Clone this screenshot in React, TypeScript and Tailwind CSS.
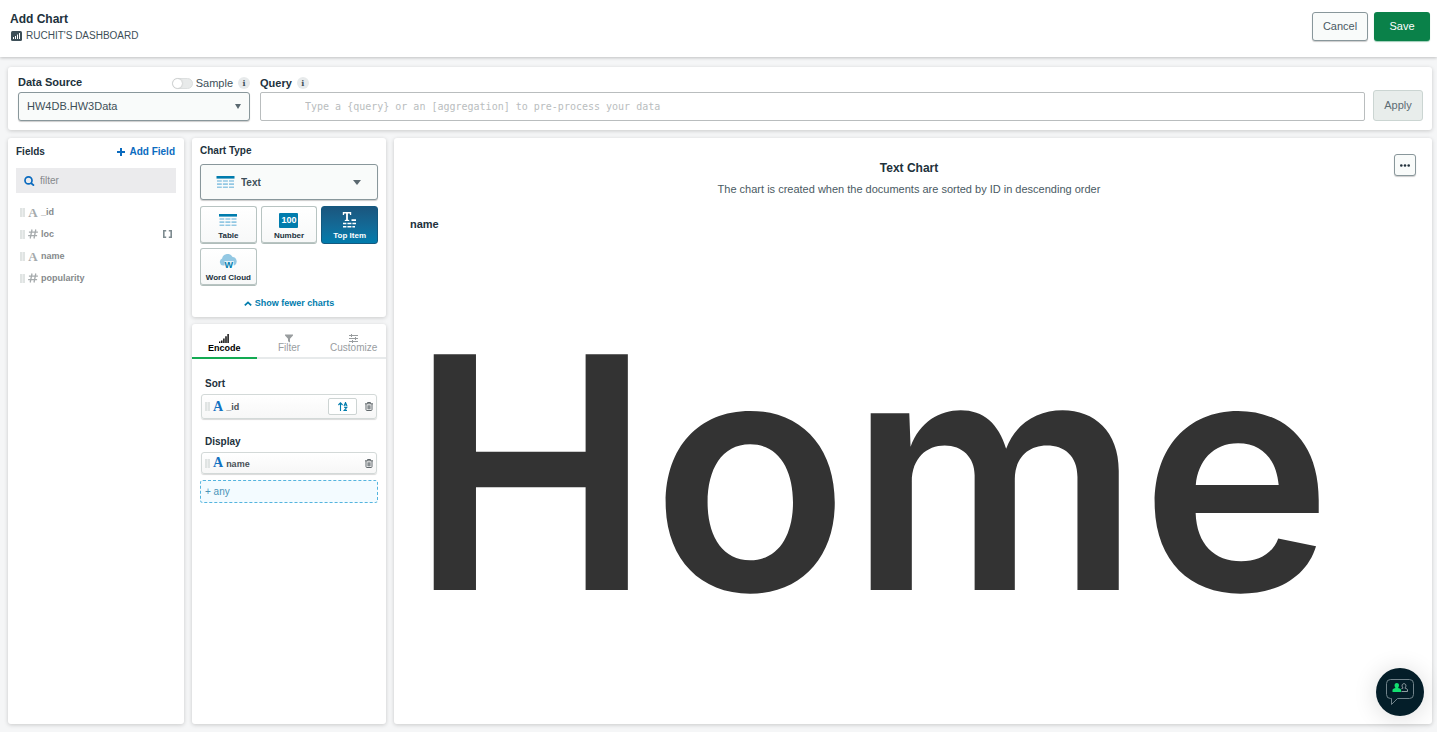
import type { ReactNode } from 'react';

const panel = 'rounded-[3px] bg-white shadow-[0_1px_4px_rgba(0,0,0,0.18)]';

function InfoButton({ label }: { label: string }) {
  return (
    <button
      type="button"
      aria-label={label}
      className="flex size-3 items-center justify-center rounded-full bg-[#e7eaeb] font-['DejaVu_Serif',serif] text-[8px] leading-none font-bold text-[#3d4f58]"
    >
      i
    </button>
  );
}

function Grip() {
  return (
    <svg width="5" height="9" viewBox="0 0 5 9" aria-hidden="true" className="shrink-0">
      <path d="M0 0h5v9H0z" fill="#eceeee" />
      <path d="M0 0h2v9H0zM3 0h2v9H3z" fill="#e0e4e3" />
    </svg>
  );
}

function LetterType({ className }: { className: string }) {
  return (
    <span aria-hidden="true" className={`font-['Liberation_Serif',serif] font-bold leading-none ${className}`}>
      A
    </span>
  );
}

function HashType() {
  return (
    <svg width="10" height="10" viewBox="0 0 10 10" aria-hidden="true" fill="none" stroke="#a6abad" strokeWidth="1.3">
      <path d="M4 .5 2.2 9.5M7.8.5 6 9.5M.9 3.2h9M.1 6.7h9" />
    </svg>
  );
}

function TableIcon({ className }: { className: string }) {
  return (
    <svg viewBox="0 0 18 13" aria-hidden="true" className={className}>
      <path d="M0 0h18v2.6H0z" fill="#007cad" />
      <path
        d="M.5 4.2h4.8v1.6H.5zM6.4 4.2h5v1.6h-5zM12.5 4.2h5v1.6h-5zM.5 7.3h4.8v1.6H.5zM6.4 7.3h5v1.6h-5zM12.5 7.3h5v1.6h-5zM.5 10.4h4.8V12H.5zM6.4 10.4h5V12h-5zM12.5 10.4h5V12h-5z"
        fill="#93c8e3"
      />
    </svg>
  );
}

function NumberIcon() {
  return (
    <span aria-hidden="true" className="flex h-[15px] w-[19px] items-center justify-center rounded-[1px] bg-[#007cad] text-[9px] leading-none font-bold text-white">
      100
    </span>
  );
}

function TopItemIcon() {
  return (
    <svg width="15" height="16" viewBox="0 0 15 16" aria-hidden="true" fill="#fff">
      <path d="M.8 0h8.400v3H8L7.700 1.400H5.900v6.400l1.300.3v1H2.800v-1l1.300-.3V1.400H2.300L2 3H.8z" />
      <path d="M9.500 7.200h4.500v1.700H9.500zM1 10.800h3.400v1.500H1zM5.400 10.800h4v1.500h-4zM10.400 10.800H14v1.500h-3.600zM1 14h3.400v1.500H1zM5.400 14h4v1.500h-4zM10.400 14H13v1.500h-2.600z" />
    </svg>
  );
}

function WordCloudIcon() {
  return (
    <span aria-hidden="true" className="relative flex h-[16px] w-[19px] items-end justify-center">
      <svg viewBox="0 0 19 14" className="absolute inset-x-0 top-0 h-[14px] w-[19px]">
        <path d="M4 11.500a3.600 3.600 0 0 1-.9-6.900A5.600 5.600 0 0 1 13.600 3a4.500 4.500 0 0 1 1.600 8.500z" fill="#93c8e3" />
        <path d="M5.500 7h9.300v7H5.500z" fill="#fff" opacity=".75" />
      </svg>
      <span className="relative pl-px text-[9px] leading-[9px] font-bold text-[#007cad]">W</span>
    </span>
  );
}

function TrashIcon() {
  return (
    <svg width="8" height="9" viewBox="0 0 8 9" aria-hidden="true" fill="none" stroke="#61686c" strokeWidth="1">
      <path d="M0 1.8h8M2.5 1.6V.5h3v1.1M1 2v5.6c0 .6.3.9.9.9h4.2c.6 0 .9-.3.9-.9V2M3 3.3v4M4 3.3v4M5 3.3v4" />
    </svg>
  );
}

function SortIcon() {
  return (
    <svg width="10" height="9" viewBox="0 0 10 9" aria-hidden="true" fill="none" stroke="#007cad" strokeWidth="1.1">
      <path d="M2.5 9V1M.4 3 2.5.9 4.6 3M6 4l1.5-3.5L9 4M6.5 3h2M6.2 5.4h2.6L6.2 8.4h2.8" />
    </svg>
  );
}

function ChartTile({ label, active, children }: { label: string; active?: boolean; children: ReactNode }) {
  const look = active
    ? 'border-[#14597f] bg-gradient-to-b from-[#1a567e] to-[#007cad] text-white'
    : 'border-[#b8c4c2] border-b-[#b0bdba] bg-gradient-to-b from-white to-[#f7f8f8] text-[#21313c] shadow-[inset_0_-1px_0_#b8c4c2]';
  return (
    <button
      type="button"
      aria-pressed={!!active}
      className={`flex h-[38px] flex-col items-center justify-between whitespace-nowrap rounded-[3px] border pt-[5px] pb-[2px] text-[8px] leading-[10px] font-bold ${look}`}
    >
      {children}
      <span>{label}</span>
    </button>
  );
}

function FieldRow({ name, kind, array }: { name: string; kind: 'text' | 'number'; array?: boolean }) {
  return (
    <li className="flex h-[22px] items-center text-[9px] leading-[12px] font-bold text-[#85898c]">
      <Grip />
      <span className="mr-[3px] ml-[3px] flex w-[10px] justify-center">
        {kind === 'text' ? <LetterType className="text-[13px] text-[#a6abad]" /> : <HashType />}
      </span>
      <span>{name}</span>
      {array && (
        <svg width="9" height="8" viewBox="0 0 9 8" aria-label="array" className="mr-1 ml-auto" fill="none" stroke="#7e8b90" strokeWidth="1.6">
          <path d="M3.2.8H.8v6.4h2.4M5.8.8h2.4v6.4H5.8" />
        </svg>
      )}
    </li>
  );
}

function Encoding({ name, sortable }: { name: string; sortable?: boolean }) {
  return (
    <div
      className={`mx-px flex items-center rounded-[3px] border border-[#d3d9d8] bg-gradient-to-b from-white to-[#f7f7f7] pr-[3px] pl-[3px] text-[9px] leading-[12px] font-bold text-[#4a5156] shadow-[0_1px_1px_rgba(0,0,0,0.15)] ${sortable ? 'h-[25px]' : 'h-[22px]'}`}
    >
      <Grip />
      <LetterType className="mr-[3px] ml-[3px] text-[14px] text-[#1272c2]" />
      <span className="flex-1 pt-px">{name}</span>
      {sortable && (
        <button type="button" aria-label="Sort order" className="mr-2 flex h-[17px] w-[29px] items-center justify-center rounded-[2px] border border-[#cdd4d3] bg-white">
          <SortIcon />
        </button>
      )}
      <button type="button" aria-label={`Remove ${name}`}>
        <TrashIcon />
      </button>
    </div>
  );
}

const tabBase = 'flex h-[35px] flex-col items-center justify-end border-b-2 pb-[4px] leading-[10px]';

export default function App() {
  return (
    <div className="relative flex min-h-screen flex-col bg-[#f5f6f7] font-['Liberation_Sans',Arial,sans-serif] text-[#21313c]">
      <header className="flex h-[57px] items-start justify-between bg-white pt-3 pr-[7px] pl-[10px] shadow-[0_1px_3px_rgba(0,0,0,0.22)]">
        <div>
          <h1 className="text-[12px] leading-[14px] font-bold">Add Chart</h1>
          <a href="#dashboard" className="mt-1 flex items-center gap-1 text-[10px] leading-[12px] text-[#3d4f58]">
            <svg width="12" height="10" viewBox="0 0 12 10" aria-hidden="true">
              <rect x="1" width="11" height="10" rx="1.5" fill="#3d4f58" />
              <path d="M3 6h1v2H3zM5 5h1v3H5zM7 3.5h1V8H7zM9 2h1v6H9z" fill="#fff" />
            </svg>
            RUCHIT'S DASHBOARD
          </a>
        </div>
        <div className="flex gap-[6px] text-[11px]">
          <button type="button" className="h-[29px] w-14 rounded-[3px] border border-[#89979b] bg-[#f9fbfa] text-[#4a5a63] shadow-[0_1px_1px_rgba(0,0,0,0.2)]">
            Cancel
          </button>
          <button type="button" className="h-[29px] w-14 rounded-[3px] bg-[#0a8149] text-white shadow-[0_1px_1px_rgba(10,129,73,0.4)]">
            Save
          </button>
        </div>
      </header>

      <main className="flex flex-1 flex-col gap-2 pt-[10px] pr-[5px] pb-2 pl-2">
        <section className={`${panel} flex items-end pt-2 pr-[9px] pb-[9px] pl-[10px]`}>
          <div className="w-[232px]">
            <div className="flex h-4 items-center justify-between">
              <label htmlFor="source" className="pb-[3px] text-[11px] leading-[12px] font-bold">
                Data Source
              </label>
              <div className="flex items-center">
                <label className="flex items-center gap-[3px] text-[11px] leading-[12px] text-[#3d4f58]">
                  <input
                    type="checkbox"
                    className="flex h-[11px] w-[21px] appearance-none items-center rounded-full border border-[#dcdfdf] bg-[#e8eaea] before:block before:size-[9px] before:rounded-full before:bg-white before:shadow-[0_0_2px_rgba(0,0,0,0.25)] before:content-['']"
                  />
                  Sample
                </label>
                <span className="ml-[5px]">
                  <InfoButton label="About sampling" />
                </span>
              </div>
            </div>
            <div className="mt-px flex h-[29px] items-center rounded-[3px] border border-[#89979b] bg-[#f9fbfa] px-2 shadow-[0_1px_1px_rgba(0,0,0,0.2)]">
              <select id="source" className="flex-1 appearance-none bg-transparent text-[11px] text-[#3d4f58] outline-none">
                <option>HW4DB.HW3Data</option>
              </select>
              <svg width="6" height="5" viewBox="0 0 6 5" aria-hidden="true">
                <path d="M0 0h6L3 5z" fill="#5b6970" />
              </svg>
            </div>
          </div>
          <div className="ml-[10px] flex-1">
            <div className="flex h-4 items-center gap-[5px]">
              <label htmlFor="query" className="text-[11px] leading-[12px] font-bold">
                Query
              </label>
              <InfoButton label="About queries" />
            </div>
            <input
              id="query"
              type="text"
              placeholder="Type a {query} or an [aggregation] to pre-process your data"
              className="mt-px block h-[29px] w-full rounded-[2px] border border-[#b9bdbe] bg-white pl-11 font-['DejaVu_Sans_Mono',monospace] text-[10px] text-[#3d4f58] outline-none placeholder:text-[#b9bdbe]"
            />
          </div>
          <button type="button" className="ml-2 h-[31px] w-[50px] rounded-[3px] border border-[#cbd5d2] bg-[#e8edeb] text-[11px] text-[#5d6c74]">
            Apply
          </button>
        </section>

        <div className="flex flex-1 gap-2">
          <aside className={`${panel} w-44 shrink-0 p-2`}>
            <div className="flex h-[12px] items-center justify-between">
              <h2 className="text-[10px] leading-[12px] font-bold">Fields</h2>
              <button type="button" className="flex items-center gap-1 pr-px text-[10px] leading-[12px] font-bold text-[#0b6bbf]">
                <svg width="8" height="8" viewBox="0 0 8 8" aria-hidden="true" stroke="#0b6bbf" strokeWidth="2">
                  <path d="M4 0v8M0 4h8" />
                </svg>
                Add Field
              </button>
            </div>
            <label className="mt-[10px] flex h-[25px] items-center gap-[5px] bg-[#ebebed] pl-2">
              <svg width="11" height="10" viewBox="0 0 11 10" aria-hidden="true" fill="none" stroke="#0b6bbf" strokeWidth="1.7" className="shrink-0">
                <circle cx="4.5" cy="4.4" r="3.5" />
                <path d="m7 7 3 2.700" />
              </svg>
              <input type="text" placeholder="filter" aria-label="Filter fields" className="w-full bg-transparent text-[10px] outline-none placeholder:text-[#85898c]" />
            </label>
            <ul className="mt-2 pl-1">
              <FieldRow name="_id" kind="text" />
              <FieldRow name="loc" kind="number" array />
              <FieldRow name="name" kind="text" />
              <FieldRow name="popularity" kind="number" />
            </ul>
          </aside>

          <div className="flex w-[194px] shrink-0 flex-col gap-[7px]">
            <section className={`${panel} px-2 pt-[7px] pb-2`}>
              <h2 className="text-[10px] leading-[12px] font-bold">Chart Type</h2>
              <div className="mt-[7px] flex h-[36px] items-center rounded-[3px] border border-[#89979b] bg-[#f9fbfa] pr-4 pl-[15px] shadow-[0_1px_1px_rgba(0,0,0,0.2)]">
                <TableIcon className="h-[13px] w-[19px]" />
                <select aria-label="Chart type" className="ml-[6px] flex-1 appearance-none bg-transparent text-[10px] font-bold text-[#3d4f58] outline-none">
                  <option>Text</option>
                </select>
                <svg width="8" height="5" viewBox="0 0 8 5" aria-hidden="true">
                  <path d="M0 0h8L4 5z" fill="#5b6970" />
                </svg>
              </div>
              <div className="mt-[6px] grid grid-cols-3 gap-1">
                <ChartTile label="Table">
                  <TableIcon className="mt-[2px] h-[13px] w-[18px]" />
                </ChartTile>
                <ChartTile label="Number">
                  <span className="pt-px">
                    <NumberIcon />
                  </span>
                </ChartTile>
                <ChartTile label="Top Item" active>
                  <TopItemIcon />
                </ChartTile>
                <ChartTile label="Word Cloud">
                  <WordCloudIcon />
                </ChartTile>
              </div>
              <button type="button" className="mx-auto mt-[11px] flex items-center gap-[3px] text-[9px] leading-[12px] font-bold text-[#007cad]">
                <svg width="8" height="5" viewBox="0 0 8 5" aria-hidden="true" fill="none" stroke="#007cad" strokeWidth="1.7">
                  <path d="m.8 4.300 3.200-3 3.200 3" />
                </svg>
                Show fewer charts
              </button>
            </section>

            <section className={`${panel} flex-1`}>
              <div role="tablist" className="grid grid-cols-3 text-[10px] text-[#999d9f]">
                <button type="button" role="tab" aria-selected="true" className={`${tabBase} border-[#13aa52] text-[9px] font-bold text-black`}>
                  <svg width="10" height="9" viewBox="0 0 10 9" aria-hidden="true">
                    <path d="M0 7.500h1.400V9H0zM2.100 6.500h1.400V9H2.100zM4.200 4.500h1.400V9H4.200zM6.300 2.200h1.400V9H6.300zM8.400 0h1.400v9H8.400z" />
                  </svg>
                  Encode
                </button>
                <button type="button" role="tab" aria-selected="false" className={`${tabBase} border-[#e7eaeb]`}>
                  <svg width="8" height="9" viewBox="0 0 8 9" aria-hidden="true" fill="#999d9f">
                    <path d="M0 .5h8v1L5 4.800V8.500L3 7.200V4.800L0 1.500z" />
                  </svg>
                  Filter
                </button>
                <button type="button" role="tab" aria-selected="false" className={`${tabBase} border-[#e7eaeb]`}>
                  <svg width="9" height="9" viewBox="0 0 9 9" aria-hidden="true" stroke="#999d9f">
                    <path d="M0 1.500h9M0 4.500h9M0 7.500h9M2.500 0v3M6.500 3v3M3.500 6v3" />
                  </svg>
                  Customize
                </button>
              </div>
              <div className="px-2 pt-[19px]">
                <h3 className="mb-1 ml-[5px] text-[10px] leading-[12px] font-bold">Sort</h3>
                <Encoding name="_id" sortable />
                <h3 className="mt-[17px] mb-1 ml-[5px] text-[10px] leading-[12px] font-bold">Display</h3>
                <Encoding name="name" />
                <button type="button" className="mt-[6px] flex h-[23px] w-full items-center rounded-[3px] border border-dashed border-[#53b4de] bg-[#f3fbff] pl-1 text-[10px] text-[#4a94b8]">
                  + any
                </button>
              </div>
            </section>
          </div>

          <section className={`${panel} flex min-w-0 flex-1 flex-col px-4 pt-4 pb-3`}>
            <div className="grid grid-cols-[22px_1fr_30px]">
              <div className="col-start-2 pt-[7px] text-center">
                <h2 className="text-[12px] leading-[14px] font-bold">Text Chart</h2>
                <p className="mt-2 text-[11px] leading-[13px] text-[#4a5a63]">
                  The chart is created when the documents are sorted by ID in descending order
                </p>
              </div>
              <button type="button" aria-label="Chart options" className="flex h-[22px] w-[22px] items-center justify-center justify-self-end rounded-[3px] border border-[#89979b] bg-[#f9fbfa] shadow-[0_1px_1px_rgba(0,0,0,0.2)]">
                <svg width="10" height="3" viewBox="0 0 10 3" aria-hidden="true" fill="#21313c">
                  <circle cx="1.3" cy="1.5" r="1.3" />
                  <circle cx="5" cy="1.5" r="1.3" />
                  <circle cx="8.700" cy="1.5" r="1.3" />
                </svg>
              </button>
            </div>
            <h3 className="mt-[22px] text-[11px] leading-[13px] font-bold">name</h3>
            <p className="my-auto font-[Inter,'Liberation_Sans',sans-serif] text-[324px] leading-[380px] font-semibold text-[#333333]">Home</p>
          </section>
        </div>
      </main>

      <button
        type="button"
        aria-label="Open support chat"
        className="fixed right-[13px] bottom-4 flex size-12 items-center justify-center rounded-full bg-[#041e29] shadow-[0_2px_24px_rgba(0,0,0,0.14)]"
      >
        <svg width="28" height="28" viewBox="0 0 28 28" aria-hidden="true" fill="none">
          <path d="M4.500 1.500h19a4 4 0 0 1 4 4v11a4 4 0 0 1-4 4h-12L5.500 26.500v-6h-1a4 4 0 0 1-4-4v-11a4 4 0 0 1 4-4z" stroke="#71838b" />
          <path d="M15.500 13.500h6v-1.600c0-1-1.400-1.500-2.600-1.800 1.500-1.500 1.400-4.400-.9-4.400s-2.400 2.900-.9 4.400c-.6.100-1.200.3-1.700.6" stroke="#b1babe" strokeWidth=".8" />
          <path d="M6.500 14v-2c0-1.200 1.600-1.700 3.100-2.100C7.900 8 8.300 5 10.800 5s2.900 3 1.200 4.900c1.500.4 3.100.9 3.100 2.100v2z" fill="#13e070" />
        </svg>
      </button>
    </div>
  );
}
